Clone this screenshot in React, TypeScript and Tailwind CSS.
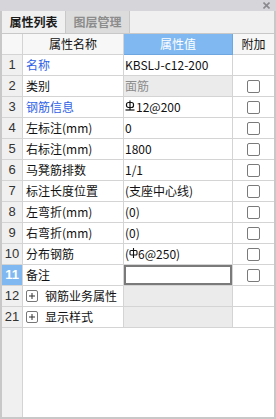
import React from 'react';

type Row = {
  no: string;
  name: React.ReactNode;
  value?: React.ReactNode;
  blue?: boolean;
  readOnly?: boolean;
  check?: boolean;
  group?: boolean;
  selected?: boolean;
};

const RebarIII = () => (
  <svg width="10" height="12" viewBox="0 0 10 12" className="inline-block mr-[1px] -mt-[3px]">
    <rect x="1.5" y="2.5" width="7" height="5" rx="2" fill="none" stroke="#111" strokeWidth="1.2" />
    <line x1="5" y1="0.5" x2="5" y2="10" stroke="#111" strokeWidth="1.2" />
    <line x1="0.5" y1="10" x2="9.5" y2="10" stroke="#111" strokeWidth="1.2" />
  </svg>
);

const RebarI = () => (
  <svg width="9" height="12" viewBox="0 0 9 12" className="inline-block -mt-[2px]">
    <rect x="1" y="3.5" width="7" height="4.5" rx="1" fill="none" stroke="#111" strokeWidth="1.1" />
    <line x1="4.5" y1="1" x2="4.5" y2="11" stroke="#111" strokeWidth="1.1" />
  </svg>
);

const PlusBox = () => (
  <span className="w-[12px] h-[12px] border border-[#777] rounded-[2px] flex items-center justify-center bg-white">
    <svg width="8" height="8" viewBox="0 0 8 8">
      <line x1="1" y1="4" x2="7" y2="4" stroke="#333" strokeWidth="1" />
      <line x1="4" y1="1" x2="4" y2="7" stroke="#333" strokeWidth="1" />
    </svg>
  </span>
);

const rows: Row[] = [
  { no: '1', name: '名称', value: 'KBSLJ-c12-200', blue: true },
  { no: '2', name: '类别', value: '面筋', readOnly: true, check: true },
  { no: '3', name: '钢筋信息', value: <><RebarIII />12@200</>, blue: true, check: true },
  { no: '4', name: '左标注(mm)', value: '0', check: true },
  { no: '5', name: '右标注(mm)', value: '1800', check: true },
  { no: '6', name: '马凳筋排数', value: '1/1', check: true },
  { no: '7', name: '标注长度位置', value: '(支座中心线)', check: true },
  { no: '8', name: '左弯折(mm)', value: '(0)', check: true },
  { no: '9', name: '右弯折(mm)', value: '(0)', check: true },
  { no: '10', name: '分布钢筋', value: <>(<RebarI />6@250)</>, check: true },
  { no: '11', name: '备注', value: '', check: true, selected: true },
  { no: '12', name: '钢筋业务属性', group: true },
  { no: '21', name: '显示样式', group: true },
];

const cols = 'grid grid-cols-[21px_101px_109px_41px]';

export default function App() {
  return (
    <div
      className="w-[276px] h-[419px] flex flex-col bg-white text-[12px] text-[#111]"
      style={{ fontFamily: '"Noto Sans CJK SC", "Liberation Sans", sans-serif' }}
    >
      {/* title bar */}
      <div className="h-[11px] bg-[#d6d6da] flex items-center justify-end pr-[6px]">
        <svg width="7" height="7" viewBox="0 0 7 7">
          <line x1="0.5" y1="0.5" x2="6.5" y2="6.5" stroke="#8a8a8e" strokeWidth="1.6" />
          <line x1="6.5" y1="0.5" x2="0.5" y2="6.5" stroke="#8a8a8e" strokeWidth="1.6" />
        </svg>
      </div>

      <div className="flex-1 flex flex-col border-x-2 border-b-2 border-[#c8c8c8] min-h-0">
        {/* tabs */}
        <div className="h-[23px] bg-[#f0f0f0] border-b border-[#c8c8c8] flex">
          <div className="w-[63px] flex items-center justify-center font-bold text-[#1a1a1a]">属性列表</div>
          <div className="w-[65px] flex items-center justify-center font-bold text-[#8c8c8c] bg-[#dcdcdc] border-x border-[#c8c8c8]">图层管理</div>
        </div>

        {/* header */}
        <div className={`${cols} h-[21px] bg-[#f7f7f7]`}>
          <div className="border-r border-b border-[#d4d4d4]" />
          <div className="border-r border-b border-[#d4d4d4] flex items-center justify-center">属性名称</div>
          <div className="border-r border-b border-[#6ea6e0] bg-[#80b9f2] text-white flex items-center justify-center">属性值</div>
          <div className="border-b border-[#d4d4d4] flex items-center justify-center">附加</div>
        </div>

        {rows.map((r) => (
          <div key={r.no} className={`${cols} h-[21px]`}>
            <div
              className={`border-r border-b border-[#d4d4d4] flex items-center justify-center text-[13px] ${
                r.selected ? 'bg-[#80b9f2] text-white font-bold' : 'bg-[#f0f0f0] text-[#333]'
              }`}
              style={{ fontFamily: '"Liberation Sans", sans-serif' }}
            >
              {r.no}
            </div>
            <div className={`border-r border-b border-[#d4d4d4] flex items-center pl-[3px] ${r.blue ? 'text-[#2f62e6]' : ''}`}>
              {r.group ? (
                <span className="flex items-center gap-[7px]">
                  <PlusBox />
                  {r.name}
                </span>
              ) : (
                r.name
              )}
            </div>
            {r.selected ? (
              <div className="border-r border-b border-[#d4d4d4] p-0">
                <div className="w-full h-full border-2 border-[#7a7a7a] bg-white" />
              </div>
            ) : (
              <div
                className={`border-r border-b border-[#d4d4d4] flex items-center pl-[1px] whitespace-nowrap ${
                  r.readOnly || r.group ? 'bg-[#ebebeb]' : ''
                } ${r.readOnly ? 'text-[#8c8c8c]' : ''}`}
              >
                {r.value}
              </div>
            )}
            <div className="border-b border-[#d4d4d4] flex items-center justify-center">
              {r.check && <span className="w-[13px] h-[13px] border border-[#7a7a7a] rounded-[2px] bg-white" />}
            </div>
          </div>
        ))}

        {/* empty area */}
        <div className="flex-1 flex">
          <div className="w-[21px] bg-[#f0f0f0] border-r border-[#d4d4d4]" />
          <div className="flex-1" />
        </div>
      </div>
    </div>
  );
}
